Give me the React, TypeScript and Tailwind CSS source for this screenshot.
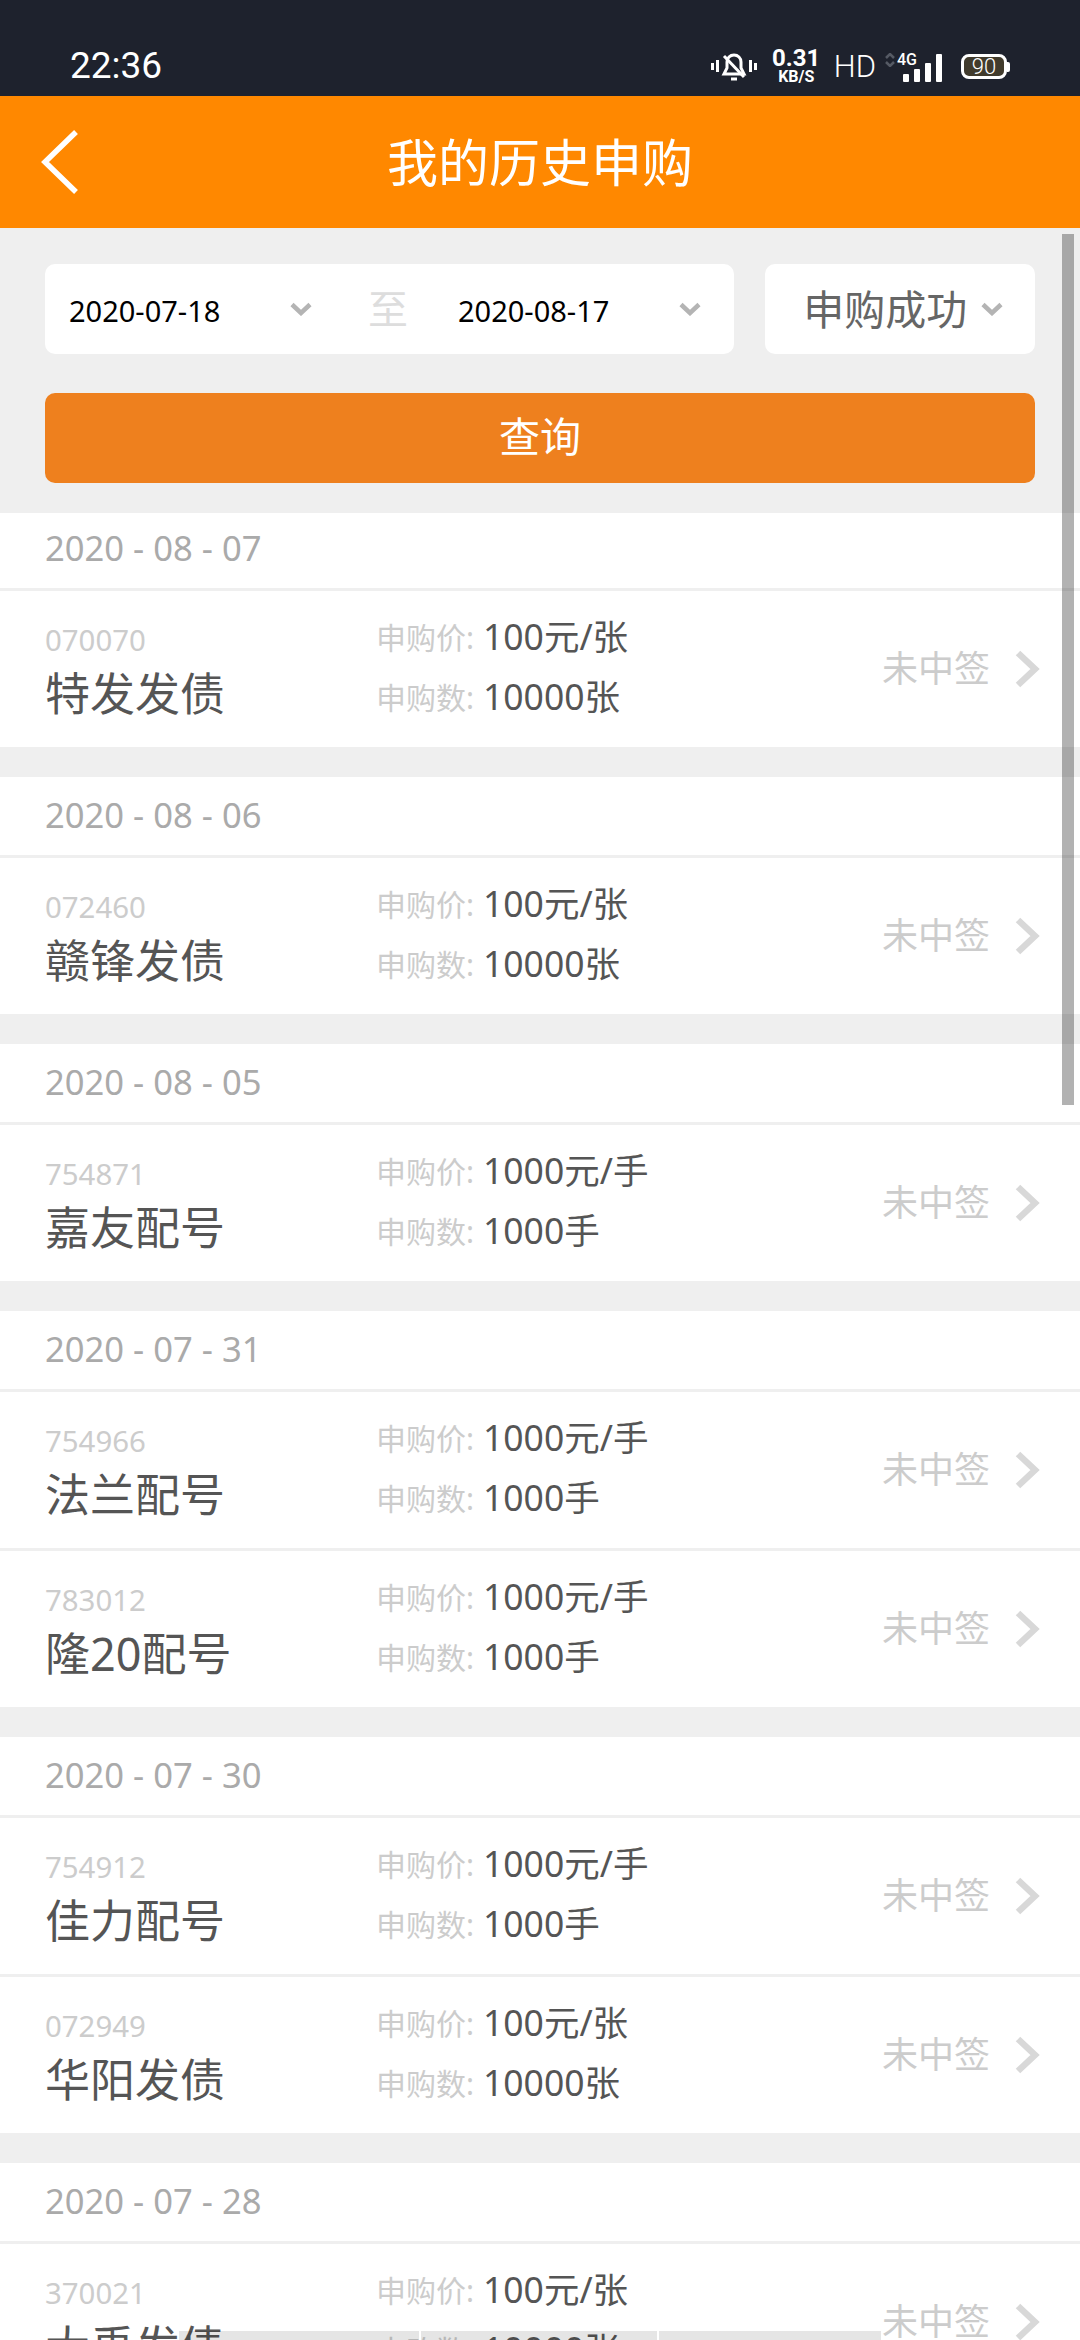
import React from "react";

type Item = { code: string; name: string; price: string; qty: string };
type Section = { date: string; items: Item[] };

const sections: Section[] = [
  { date: "2020 - 08 - 07", items: [{ code: "070070", name: "特发发债", price: "100元/张", qty: "10000张" }] },
  { date: "2020 - 08 - 06", items: [{ code: "072460", name: "赣锋发债", price: "100元/张", qty: "10000张" }] },
  { date: "2020 - 08 - 05", items: [{ code: "754871", name: "嘉友配号", price: "1000元/手", qty: "1000手" }] },
  {
    date: "2020 - 07 - 31",
    items: [
      { code: "754966", name: "法兰配号", price: "1000元/手", qty: "1000手" },
      { code: "783012", name: "隆20配号", price: "1000元/手", qty: "1000手" },
    ],
  },
  {
    date: "2020 - 07 - 30",
    items: [
      { code: "754912", name: "佳力配号", price: "1000元/手", qty: "1000手" },
      { code: "072949", name: "华阳发债", price: "100元/张", qty: "10000张" },
    ],
  },
  { date: "2020 - 07 - 28", items: [{ code: "370021", name: "大禹发债", price: "100元/张", qty: "10000张" }] },
];

function SmallChevron({ className }: { className?: string }) {
  return (
    <svg width="22" height="14" viewBox="0 0 22 14" className={className} fill="none">
      <path d="M2 2.5 L11 11 L20 2.5" stroke="#b4b4b4" strokeWidth="4.5" />
    </svg>
  );
}

function StatusIcons() {
  return (
    <div className="flex items-start text-white">
      <svg width="46" height="30" viewBox="0 0 46 30" fill="none" className="mt-[52px]">
        <path d="M1.5 11v7M6.5 8v12M39.5 8v12M44.5 11v7" stroke="white" strokeWidth="3" />
        <path d="M13 22h20l-3-6v-6c0-4-3-7-7-7s-7 3-7 7v6z" stroke="white" strokeWidth="3" />
        <path d="M13 4l20 21" stroke="white" strokeWidth="3" />
        <path d="M20 27h6" stroke="white" strokeWidth="3" />
      </svg>
      <div className="ml-[16px] mt-[47px] flex w-[47px] flex-col items-center font-['Roboto',sans-serif] font-bold">
        <span className="text-[24px] leading-[22px]">0.31</span>
        <span className="mt-[1px] text-[16px] leading-[14px]">KB/S</span>
      </div>
      <span className="ml-[14px] mt-[48px] font-['Roboto',sans-serif] text-[31px] font-light leading-[38px]">HD</span>
      <svg width="10" height="14" viewBox="0 0 10 14" fill="none" className="ml-[9px] mt-[53px]">
        <path d="M1 5l4-4 4 4M1 9l4 4 4-4" stroke="#555a64" strokeWidth="2.5" />
      </svg>
      <div className="relative ml-[2px] mt-[52px] h-[30px] w-[46px]">
        <span className="absolute left-0 top-0 font-['Roboto',sans-serif] text-[16px] font-medium leading-[15px]">4G</span>
        <div className="absolute bottom-0 left-[6px] flex items-end gap-[5px]">
          <div className="h-[8px] w-[6px] rounded-[1px] bg-white" />
          <div className="h-[13px] w-[6px] rounded-[1px] bg-white" />
          <div className="h-[19px] w-[6px] rounded-[1px] bg-white" />
          <div className="h-[28px] w-[6px] rounded-[1px] bg-white" />
        </div>
      </div>
      <div className="ml-[18px] mt-[54px] flex items-center">
        <div className="flex h-[25px] w-[46px] items-center justify-center rounded-[8px] border-[3px] border-white bg-[#413b2c] font-['Roboto',sans-serif] text-[22px] font-light leading-none">
          90
        </div>
        <div className="h-[10px] w-[3px] rounded-r-[2px] bg-white" />
      </div>
    </div>
  );
}

function Row({ item, divided }: { item: Item; divided: boolean }) {
  return (
    <div className={divided ? "flex h-[159px] items-center border-t-[3px] border-[#efefef] pl-[45px]" : "flex h-[156px] items-center pl-[45px]"}>
      <div className="flex w-[331px] flex-col pt-[7px]">
        <span className="text-[29.4px] leading-[36px] text-[#cccccc]">{item.code}</span>
        <span className="mt-[7px] text-[45px] leading-[58px] text-[#555555]">{item.name}</span>
      </div>
      <div className="flex flex-1 flex-col pb-[3px]">
        <div className="flex h-[60px] items-center">
          <span className="w-[107px] text-[30px] text-[#cccccc]">申购价:</span>
          <span className="pb-[3px] text-[35.5px] leading-[48px] text-[#555555]">{item.price}</span>
        </div>
        <div className="flex h-[60px] items-center">
          <span className="w-[107px] text-[30px] text-[#cccccc]">申购数:</span>
          <span className="pb-[3px] text-[35.5px] leading-[48px] text-[#555555]">{item.qty}</span>
        </div>
      </div>
      <span className="text-[36px] text-[#cccccc]">未中签</span>
      <svg width="26" height="38" viewBox="0 0 26 38" fill="none" className="ml-[24px] mr-[40px]">
        <path d="M4 3 L21 19 L4 35" stroke="#d8d8d8" strokeWidth="6.5" />
      </svg>
    </div>
  );
}

export default function App() {
  return (
    <div className="relative h-[2340px] w-[1080px] overflow-hidden bg-[#efefef] font-['Noto_Sans','Noto_Sans_CJK_SC',sans-serif]">
      <div className="flex h-[96px] justify-between bg-[#1e222d] pl-[70px] pr-[70px]">
        <span className="mt-[44px] font-['Roboto',sans-serif] text-[37px] leading-[44px] text-white">22:36</span>
        <StatusIcons />
      </div>

      <div className="relative flex h-[132px] items-center justify-center bg-[#ff8800]">
        <svg width="38" height="64" viewBox="0 0 38 64" fill="none" className="absolute left-[41px] top-[34px]">
          <path d="M35 2 L4 32 L35 62" stroke="white" strokeWidth="5.5" />
        </svg>
        <span className="text-[51px] leading-none text-white">我的历史申购</span>
      </div>

      <div className="px-[45px] pt-[36px]">
        <div className="flex h-[90px] gap-[31px]">
          <div className="flex w-[690px] items-center rounded-[10px] bg-white pl-[24px]">
            <span className="w-[221px] pt-[2px] text-[29px] leading-none text-black">2020-07-18</span>
            <SmallChevron />
            <span className="ml-[56px] w-[90px] text-[40px] leading-none text-[#dddddd]">至</span>
            <span className="w-[221px] pt-[2px] text-[29px] leading-none text-black">2020-08-17</span>
            <SmallChevron />
          </div>
          <div className="flex w-[270px] items-center rounded-[10px] bg-white pl-[38px]">
            <span className="text-[41px] leading-none text-[#666666]">申购成功</span>
            <SmallChevron className="ml-[14px]" />
          </div>
        </div>
        <div className="mt-[39px] flex h-[90px] w-[990px] items-center justify-center rounded-[10px] bg-[#ee801e] pb-[2px] text-[41px] text-white">
          查询
        </div>
      </div>

      <div className="mt-[30px]">
        {sections.map((s, i) => (
          <div key={s.date} className="mb-[30px] bg-white">
            <div className={i === 0 ? "flex h-[78px] items-center border-b-[3px] border-[#efefef] pb-[5px] pl-[45px]" : "flex h-[81px] items-center border-b-[3px] border-[#efefef] pb-[1px] pl-[45px]"}>
              <span className="text-[34.6px] leading-none text-[#aaaaaa]">{s.date}</span>
            </div>
            {s.items.map((it, j) => (
              <Row key={it.code} item={it} divided={j > 0} />
            ))}
          </div>
        ))}
      </div>

      <div className="absolute right-[6px] top-[234px] h-[871px] w-[12px] bg-black/30" />

      <div className="absolute bottom-0 left-[179px] flex h-[9px] w-[702px] gap-[2px]">
        <div className="w-[240px] bg-black/10" />
        <div className="w-[236px] bg-black/10" />
        <div className="flex-1 bg-black/10" />
      </div>
    </div>
  );
}
